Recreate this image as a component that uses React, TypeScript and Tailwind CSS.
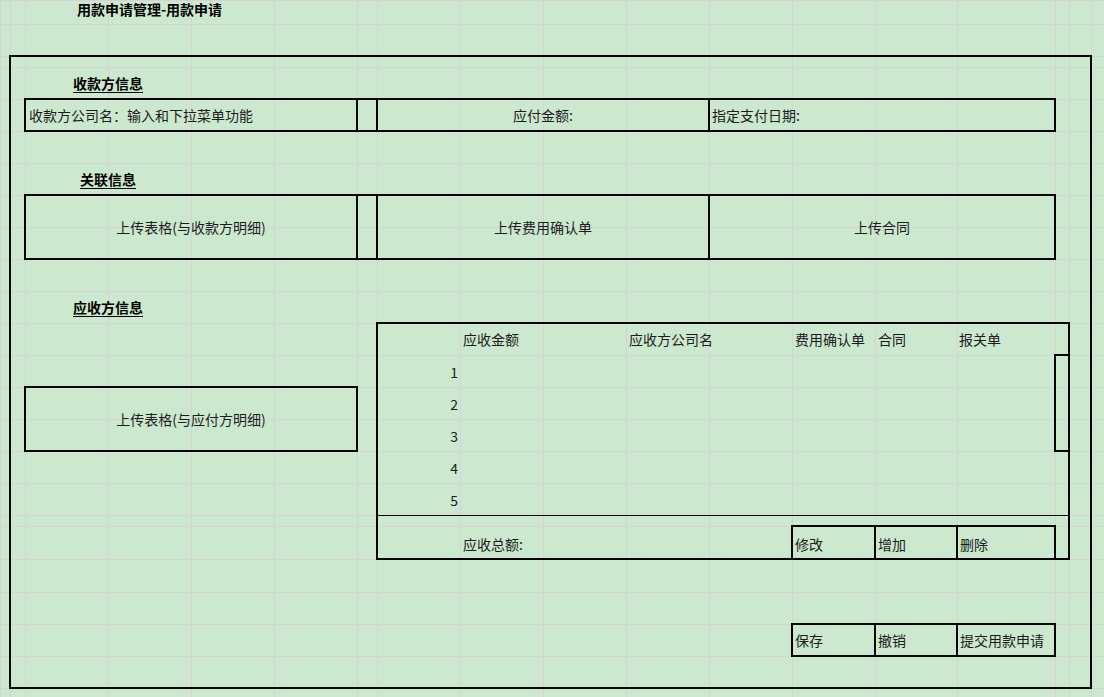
import React from "react";

const COLS = 18;
const ROWS = 24;

const font = { fontFamily: '"Noto Sans CJK SC", "Noto Sans", sans-serif' };

export default function App() {
  const cells: React.ReactNode[] = [];
  for (let r = 0; r < ROWS; r++) {
    for (let c = 0; c < COLS; c++) {
      cells.push(
        <div
          key={`${r}-${c}`}
          className="border-l border-t border-[#d6d3d6]"
          style={{ gridColumn: c + 1, gridRow: r + 1 }}
        />
      );
    }
  }

  return (
    <div
      className="w-[1104px] h-[697px] overflow-hidden bg-[#cce8cf] text-[14px] leading-none text-[#1c1c1c] whitespace-nowrap font-['Noto_Sans_CJK_SC',_'Noto_Sans',_sans-serif]"
      style={font}
    >
      <div className="grid grid-cols-[10px_15px_83px_83px_83px_83px_20px_83px_83px_83px_83px_83px_83px_82px_98px_14px_22px_1fr] grid-rows-[24px_32px_11px_32px_32px_32px_32px_32px_32px_32px_32px_32px_32px_32px_32px_32px_32px_11px_33px_33px_32px_32px_32px_32px]">
        {cells}

        {/* Title */}
        <div className="col-[3/6] row-[1/2] flex items-center justify-center pb-[6px] font-bold text-black">
          用款申请管理-用款申请
        </div>

        {/* Outer frame */}
        <div className="col-[2/18] row-[3/24] -m-px border-2 border-black" />

        {/* 收款方信息 */}
        <div className="col-[3/5] row-[4/5] flex items-center justify-center font-bold text-black">
          <span className="underline underline-offset-[3px]">收款方信息</span>
        </div>
        <div className="col-[3/7] row-[5/6] -m-px border-2 border-black flex items-center pl-[3px]">
          收款方公司名：输入和下拉菜单功能
        </div>
        <div className="col-[7/8] row-[5/6] -m-px border-2 border-black" />
        <div className="col-[8/12] row-[5/6] -m-px border-2 border-black flex items-center justify-center">
          应付金额:
        </div>
        <div className="col-[12/16] row-[5/6] -m-px border-2 border-black flex items-center pl-[2px]">
          指定支付日期:
        </div>

        {/* 关联信息 */}
        <div className="col-[3/5] row-[7/8] flex items-center justify-center font-bold text-black">
          <span className="underline underline-offset-[3px]">关联信息</span>
        </div>
        <div className="col-[3/7] row-[8/10] -m-px border-2 border-black flex items-center justify-center">
          上传表格(与收款方明细)
        </div>
        <div className="col-[7/8] row-[8/10] -m-px border-2 border-black" />
        <div className="col-[8/12] row-[8/10] -m-px border-2 border-black flex items-center justify-center">
          上传费用确认单
        </div>
        <div className="col-[12/16] row-[8/10] -m-px border-2 border-black flex items-center justify-center">
          上传合同
        </div>

        {/* 应收方信息 */}
        <div className="col-[3/5] row-[11/12] flex items-center justify-center font-bold text-black">
          <span className="underline underline-offset-[3px]">应收方信息</span>
        </div>
        <div className="col-[3/7] row-[14/16] -m-px border-2 border-black flex items-center justify-center">
          上传表格(与应付方明细)
        </div>

        {/* Table */}
        <div className="col-[8/17] row-[12/20] -m-px border-2 border-black" />
        <div className="col-[8/17] row-[18/19] border-t border-black" />
        <div className="col-[16/17] row-[13/16] -m-px border-2 border-black" />

        <div className="col-[9/10] row-[12/13] flex items-center pl-[3px]">应收金额</div>
        <div className="col-[11/12] row-[12/13] flex items-center pl-[3px]">应收方公司名</div>
        <div className="col-[13/14] row-[12/13] flex items-center pl-[3px]">费用确认单</div>
        <div className="col-[14/15] row-[12/13] flex items-center pl-[3px]">合同</div>
        <div className="col-[15/16] row-[12/13] flex items-center pl-[2px]">报关单</div>

        <div className="col-[8/9] row-[13/14] flex items-center justify-end pr-[2px] pt-[2px]">1</div>
        <div className="col-[8/9] row-[14/15] flex items-center justify-end pr-[2px] pt-[2px]">2</div>
        <div className="col-[8/9] row-[15/16] flex items-center justify-end pr-[2px] pt-[2px]">3</div>
        <div className="col-[8/9] row-[16/17] flex items-center justify-end pr-[2px] pt-[2px]">4</div>
        <div className="col-[8/9] row-[17/18] flex items-center justify-end pr-[2px] pt-[2px]">5</div>

        <div className="col-[9/10] row-[19/20] flex items-center pl-[3px] pt-[2px]">应收总额:</div>
        <div className="col-[13/14] row-[19/20] -m-px border-2 border-black flex items-center pl-[2px] pt-[3px]">修改</div>
        <div className="col-[14/15] row-[19/20] -m-px border-2 border-black flex items-center pl-[2px] pt-[3px]">增加</div>
        <div className="col-[15/16] row-[19/20] -m-px border-2 border-black flex items-center pl-[2px] pt-[3px]">删除</div>

        {/* Action buttons */}
        <div className="col-[13/14] row-[22/23] -m-px border-2 border-black flex items-center pl-[2px]">保存</div>
        <div className="col-[14/15] row-[22/23] -m-px border-2 border-black flex items-center pl-[2px]">撤销</div>
        <div className="col-[15/16] row-[22/23] -m-px border-2 border-black flex items-center pl-[2px]">提交用款申请</div>
      </div>
    </div>
  );
}
